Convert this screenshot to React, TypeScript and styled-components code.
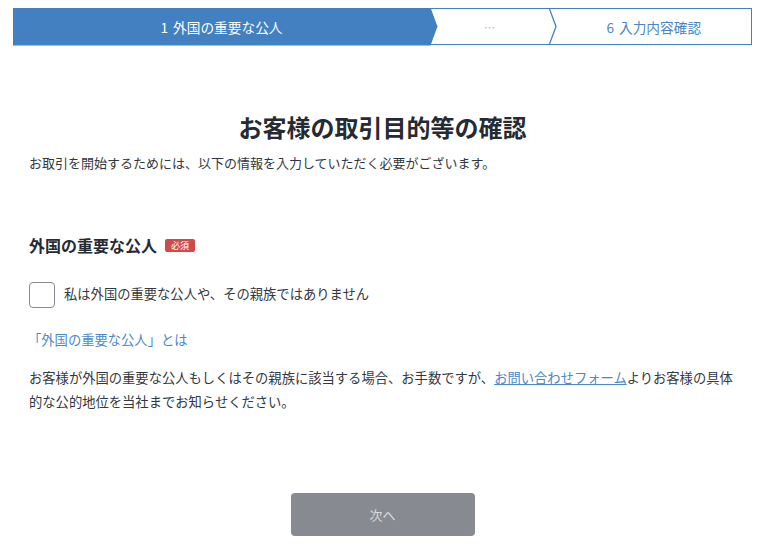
import React from "react";
import styled, { createGlobalStyle } from "styled-components";

const GlobalStyle = createGlobalStyle`
  html, body {
    margin: 0;
    padding: 0;
    background: #ffffff;
  }
  body {
    font-family: "Noto Sans CJK JP", "Noto Sans", sans-serif;
    color: #333840;
  }
`;

const Page = styled.div`
  padding: 8px 17px 0 13px;
`;

const Stepper = styled.div`
  display: flex;
  height: 37px;
  border: 1.5px solid #4380c1;
  box-sizing: border-box;
`;

const Step = styled.div<{ $active?: boolean; $width?: number }>`
  flex: ${(p) => (p.$width ? `0 0 ${p.$width}px` : "1 1 auto")};
  box-sizing: border-box;
  display: flex;
  align-items: center;
  justify-content: center;
  font-size: 13.7px;
  color: ${(p) => (p.$active ? "#ffffff" : "#4a86c5")};
  background: ${(p) => (p.$active ? "#4380c1" : "transparent")};
  clip-path: ${(p) =>
    p.$active
      ? "polygon(0 0, calc(100% - 7px) 0, 100% 50%, calc(100% - 7px) 100%, 0 100%)"
      : "none"};
  margin: ${(p) => (p.$active ? "-1.5px -7px -1.5px -1.5px" : "0")};
  padding-right: ${(p) => (p.$active ? "7px" : "0")};
`;

const StepNum = styled.span`
  margin-right: 5px;
`;

const Dots = styled.span`
  color: #8cc4e8;
  font-size: 11px;
`;

const Chevron = styled.svg`
  flex: 0 0 8px;
  height: 100%;
  display: block;
`;

const Main = styled.main`
  padding: 0 16px;
`;

const Title = styled.h1`
  margin: 65px 0 0;
  text-align: center;
  font-size: 24px;
  line-height: 34px;
  font-weight: 700;
  color: #262b33;
`;

const Lead = styled.p`
  margin: 9px 0 0;
  font-size: 13px;
  line-height: 20px;
`;

const SectionHead = styled.div`
  margin-top: 60px;
  display: flex;
  align-items: center;
  gap: 8px;
  height: 24px;
`;

const SectionTitle = styled.h2`
  margin: 0;
  font-size: 16px;
  font-weight: 700;
  color: #262b33;
`;

const Badge = styled.span`
  display: inline-flex;
  align-items: center;
  justify-content: center;
  width: 30px;
  height: 13px;
  border-radius: 2px;
  background: #d14a4b;
  color: #ffffff;
  font-size: 9px;
  line-height: 1;
`;

const CheckRow = styled.label`
  margin-top: 25px;
  display: flex;
  align-items: center;
  gap: 9px;
  font-size: 13.3px;
  line-height: 20px;
  cursor: pointer;
`;

const Box = styled.span`
  flex: 0 0 26px;
  height: 26px;
  box-sizing: border-box;
  border: 1px solid #868b92;
  border-radius: 4px;
  background: #ffffff;
`;

const CheckText = styled.span`
  margin-top: -3px;
`;

const InfoLink = styled.a`
  display: block;
  margin-top: 22px;
  font-size: 13.3px;
  line-height: 20px;
  color: #4a89c8;
  text-decoration: none;
  margin-left: -1px;
`;

const Body = styled.p`
  margin: 16px 0 0;
  font-size: 13.3px;
  line-height: 24px;
`;

const InlineLink = styled.a`
  color: #4a89c8;
  text-decoration: underline;
`;

const Footer = styled.div`
  margin-top: 79px;
  display: flex;
  justify-content: center;
`;

const NextButton = styled.button`
  width: 184px;
  height: 43px;
  border: none;
  border-radius: 4px;
  background: #878b91;
  color: #d9dbde;
  font-family: inherit;
  font-size: 13px;
  cursor: not-allowed;
`;

export default function App(): JSX.Element {
  return (
    <Page>
      <GlobalStyle />
      <Stepper>
        <Step $active $width={425}>
          <StepNum>1</StepNum>外国の重要な公人
        </Step>
        <Step $width={118}>
          <Dots>…</Dots>
        </Step>
        <Chevron viewBox="0 0 8 34" preserveAspectRatio="none">
          <polyline points="0.5,0 7,17 0.5,34" fill="none" stroke="#4380c1" strokeWidth="1.3" />
        </Chevron>
        <Step>
          <StepNum>6</StepNum>入力内容確認
        </Step>
      </Stepper>

      <Main>
        <Title>お客様の取引目的等の確認</Title>
        <Lead>お取引を開始するためには、以下の情報を入力していただく必要がございます。</Lead>

        <SectionHead>
          <SectionTitle>外国の重要な公人</SectionTitle>
          <Badge>必須</Badge>
        </SectionHead>

        <CheckRow>
          <Box />
          <CheckText>私は外国の重要な公人や、その親族ではありません</CheckText>
        </CheckRow>

        <InfoLink href="#">「外国の重要な公人」とは</InfoLink>

        <Body>
          <span>お客様が外国の重要な公人もしくはその親族に該当する場合、お手数ですが、</span>
          <InlineLink href="#">お問い合わせフォーム</InlineLink>
          <span>よりお客様の具体</span>
          <span>的な公的地位を当社までお知らせください。</span>
        </Body>

        <Footer>
          <NextButton disabled>次へ</NextButton>
        </Footer>
      </Main>
    </Page>
  );
}
